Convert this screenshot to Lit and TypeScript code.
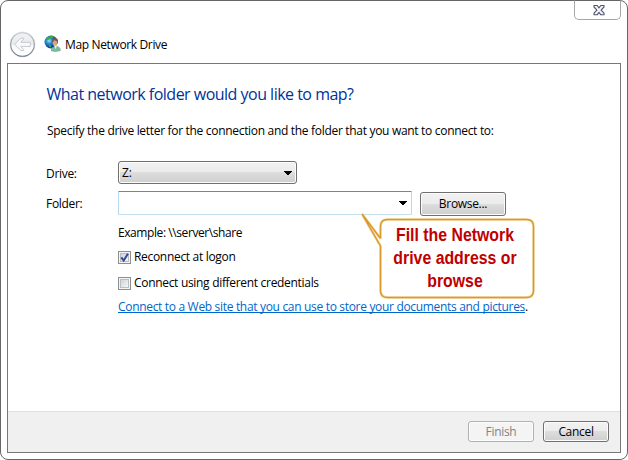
import { LitElement, html, css } from "lit";
import { customElement } from "lit/decorators.js";

@customElement("app-root")
class MapDriveDialog extends LitElement {
  static styles = css`
    :host { display: block; width: 628px; height: 460px; background: #fff; overflow: hidden; }
    * { box-sizing: border-box; }
    svg { display: block; }
    .window {
      position: relative; width: 628px; height: 460px; padding: 0 6px 6px;
      border: 1px solid #666668; border-radius: 8px; background: #fff;
      display: flex; flex-direction: column;
      font: 12px/16px "Open Sans", "Noto Sans", sans-serif; color: #000;
    }
    .close {
      position: absolute; right: 6px; top: -1px; width: 47px; height: 20px;
      border: 1px solid #a6a6a6; border-top-color: #666668; border-radius: 0 0 5px 5px;
      padding: 4px 0 0 18px;
    }
    .title { height: 62px; flex: none; display: flex; padding: 30px 0 0 2px; }
    .title .net { margin: 4px 0 0 8px; }
    .title .name { margin: 6px 0 0 4px; letter-spacing: -0.36px; }
    .panel { flex: 1; border: 1px solid #777; display: flex; flex-direction: column; }
    .body { flex: 1; padding: 19px 0 0 39px; }
    .t { white-space: nowrap; letter-spacing: -0.31px; }
    h1 { margin: 0 0 0 -0.5px; font-size: 16px; font-weight: 400; line-height: 22px; color: #039; white-space: nowrap; letter-spacing: -0.51px; }
    .lead { margin-top: 18px; height: 16px; }
    .grid { margin-top: 22px; display: grid; grid-template-columns: 71px 294px 86px; grid-template-rows: 24px 24px; row-gap: 6px; }
    .lab { margin: 5px 0 0 -1px; }
    .btn {
      border: 1px solid #707070; border-radius: 3px; box-shadow: inset 0 0 0 1px #fcfcfc;
      background: linear-gradient(#f2f2f2, #ebebeb 50%, #dddddd 50%, #cfcfcf);
      display: flex; align-items: center; justify-content: center;
    }
    .combo { width: 179px; height: 23px; justify-content: space-between; padding: 1px 4px 0 3px; }
    .input { height: 24px; border: 1px solid; border-color: #4f92bd #b9d9ee #c5e1f0 #b9d9ee; border-radius: 1px; display: flex; justify-content: flex-end; padding: 9px 4px 0 0; }
    .browse { margin: 1px 0 0 8px; width: 86px; height: 24px; }
    .under { padding-left: 71px; }
    .ex { margin-top: 10px; height: 16px; letter-spacing: -0.42px; }
    .check { display: flex; align-items: center; gap: 3px; height: 16px; margin-top: 8px; }
    .check + .check { margin-top: 10px; }
    .box { width: 13px; height: 13px; border: 1px solid #8e8f8f; background: #f4f4f4; padding: 1px; }
    .box i { display: block; width: 9px; height: 9px; border: 1px solid #b9bec4; background: linear-gradient(135deg, #cfd3d8, #f6f6f6); }
    .box svg { margin: -9px 0 0 0; }
    .link { margin-top: 8px; letter-spacing: -0.32px; }
    .link a { color: #06c; text-decoration: underline; text-underline-offset: 1px; text-decoration-skip-ink: none; }
    .foot { height: 41px; border-top: 1px solid #dfdfdf; background: #f0f0f0; display: flex; justify-content: flex-end; gap: 9px; padding: 9px 11px 0 0; }
    .foot .btn { width: 66px; height: 21px; }
    .foot .off { color: #838383; border-color: #adb2b5; background: #f4f4f4; }
    .callout { position: absolute; left: 359px; top: 210px; width: 176px; height: 90px; }
    .callout svg { position: absolute; left: 0; top: 0; }
    .msg { position: absolute; left: 19px; top: 13px; width: 152px; text-align: center; font: bold 18px/23px "Liberation Sans", Arial, sans-serif; color: #c00000; white-space: nowrap; transform: scaleX(0.88); }
  `;

  arrow() {
    return html`<svg width="8" height="5" viewBox="0 0 8 5"><path d="M0 0h8v1H7v1H6v1H5v1H3V3H2V2H1V1H0z" fill="#000" shape-rendering="crispEdges"/></svg>`;
  }

  render() {
    return html`
      <div class="window">
        <div class="close">
          <svg width="12" height="11" viewBox="0 0 12 11"><path d="M1 .5H4.2L6 2.9 7.8.5H11V2L8.1 5.1 11 8.2V9.8H7.8L6 7.4 4.2 9.8H1V8.2L3.9 5.1 1 2z" fill="#f4f4f6" stroke="#50536d" stroke-width="1.1" stroke-linejoin="round"/></svg>
        </div>
        <div class="title">
          <svg width="27" height="28" viewBox="0 0 27 28">
            <defs><linearGradient id="b" x1="0" y1="0" x2="0" y2="1"><stop offset="0" stop-color="#f0f1f2"/><stop offset=".5" stop-color="#e9ebed"/><stop offset=".52" stop-color="#f8f9fa"/><stop offset="1" stop-color="#fff"/></linearGradient>
            <linearGradient id="r" x1="0" y1="0" x2="0" y2="1"><stop offset="0" stop-color="#c0c4c8"/><stop offset="1" stop-color="#68748a"/></linearGradient></defs>
            <circle cx="13.5" cy="13.5" r="12.6" fill="none" stroke="#e9e9e9"/>
            <circle cx="13.5" cy="13.5" r="11.8" fill="url(#b)" stroke="url(#r)" stroke-width="1.1"/>
            <path d="M5.5 13.3L12 7.2H14.6V8L11.8 11.3H21.3V15.4H11.8L14.6 18.7V19.5H12z" fill="#fafafa" stroke="#c5c9cd" stroke-linejoin="round"/>
          </svg>
          <svg class="net" width="17" height="17" viewBox="0 0 17 17">
            <defs><radialGradient id="g" cx=".35" cy=".4"><stop offset="0" stop-color="#9fe5ff"/><stop offset=".45" stop-color="#258fe0"/><stop offset="1" stop-color="#103f9c"/></radialGradient></defs>
            <circle cx="7" cy="7" r="6.5" fill="url(#g)"/>
            <path d="M5 1.4Q8 0 10.5 1.4L9.2 2.8 7 3.2 5.2 4.6 3 4.9 1.6 6.4Q1.6 3.4 5 1.4zM4.4 9.6L7 10.2 7.2 12.6 5.7 12.2z" fill="#42a83b"/>
            <path d="M7.5 16V13.7Q8 12.3 10 12L14 11.4Q16.4 12.6 16.5 15.5 12 17.2 7.5 16z" fill="#7dbd9f" stroke="#5b9c83" stroke-width=".5"/>
            <path d="M9.6 10L11.6 14.2 13.1 10z" fill="#f3e7dc"/>
            <ellipse cx="11" cy="7.6" rx="2.4" ry="3.2" fill="#d4a586"/>
            <path d="M8 6.5Q7.7 3 11 3 14.3 3 14 6.5L13.2 9.2 12.7 6 10 5.2 8.8 7.8z" fill="#76574a"/>
          </svg>
          <span class="t name">Map Network Drive</span>
        </div>
        <div class="panel">
          <div class="body">
            <h1>What network folder would you like to map?</h1>
            <div class="t lead">Specify the drive letter for the connection and the folder that you want to connect to:</div>
            <div class="grid">
              <span class="t lab">Drive:</span>
              <div class="btn combo"><span>Z:</span>${this.arrow()}</div>
              <span></span>
              <span class="t lab">Folder:</span>
              <div class="input">${this.arrow()}</div>
              <div class="btn browse"><span class="t">Browse...</span></div>
            </div>
            <div class="under">
              <div class="t ex">Example: \\\\server\\share</div>
              <div class="check"><div class="box"><i></i><svg width="10" height="10" viewBox="0 0 10 10"><path d="M1.3 4.4L3.7 7.5 7.9 .8" fill="none" stroke="#35489b" stroke-width="2"/></svg></div><span class="t">Reconnect at logon</span></div>
              <div class="check"><div class="box"><i></i></div><span class="t">Connect using different credentials</span></div>
              <div class="t link"><a>Connect to a Web site that you can use to store your documents and pictures</a>.</div>
            </div>
          </div>
          <div class="foot">
            <div class="btn off"><span class="t">Finish</span></div>
            <div class="btn"><span class="t">Cancel</span></div>
          </div>
        </div>
        <div class="callout">
          <svg width="176" height="90" viewBox="0 0 176 90"><path d="M20.5 27.5V15.5Q20.5 8.5 27.5 8.5H166.5Q173.5 8.5 173.5 15.5V79.5Q173.5 86.5 166.5 86.5H27.5Q20.5 86.5 20.5 79.5V35L2 3L20.5 27.5" fill="#fff" stroke="#f3d9a8" stroke-width="2.6"/><path d="M20.5 27.5V15.5Q20.5 8.5 27.5 8.5H166.5Q173.5 8.5 173.5 15.5V79.5Q173.5 86.5 166.5 86.5H27.5Q20.5 86.5 20.5 79.5V35L2 3L20.5 27.5" fill="none" stroke="#d99a2b" stroke-width="1.4"/></svg>
          <div class="msg">Fill the Network<br />drive address or<br />browse</div>
        </div>
      </div>`;
  }
}
